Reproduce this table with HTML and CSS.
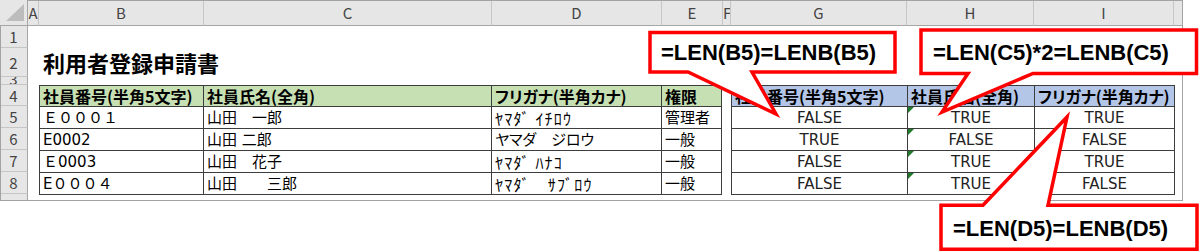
FILE: index.html
```html
<!DOCTYPE html>
<html>
<head>
    <meta charset="utf-8">
    <title>利用者登録申請書</title>
    <link rel="stylesheet" href="styles.css">
</head>
<body>
    <div class="sheet">
        <div class="corner"></div>
        <div class="colhead">A</div>
        <div class="colhead">B</div>
        <div class="colhead">C</div>
        <div class="colhead">D</div>
        <div class="colhead">E</div>
        <div class="colhead">F</div>
        <div class="colhead">G</div>
        <div class="colhead">H</div>
        <div class="colhead">I</div>
        <div class="colhead colhead-end"></div>

        <div class="rowhead">1</div>
        <div class="rowhead">2</div>
        <div class="rowhead rowhead-thin">3</div>
        <div class="rowhead">4</div>
        <div class="rowhead">5</div>
        <div class="rowhead">6</div>
        <div class="rowhead">7</div>
        <div class="rowhead">8</div>
        <div class="rowhead rowhead-end"></div>

        <div class="title">利用者登録申請書</div>

        <!-- 入力データ -->
        <table class="list list-src">
            <colgroup>
                <col class="w-b">
                <col class="w-c">
                <col class="w-d">
                <col class="w-e">
            </colgroup>
            <tr class="src-head">
                <th>社員番号(半角5文字)</th>
                <th>社員氏名(全角)</th>
                <th class="kana">フリガナ(半角カナ)</th>
                <th>権限</th>
            </tr>
            <tr>
                <td>Ｅ０００１</td>
                <td>山田　一郎</td>
                <td class="hw">ﾔﾏﾀﾞ ｲﾁﾛｳ</td>
                <td>管理者</td>
            </tr>
            <tr>
                <td>E0002</td>
                <td>山田 二郎</td>
                <td class="kana">ヤマダ　ジロウ</td>
                <td>一般</td>
            </tr>
            <tr>
                <td>Ｅ0003</td>
                <td>山田　花子</td>
                <td class="hw">ﾔﾏﾀﾞ ﾊﾅｺ</td>
                <td>一般</td>
            </tr>
            <tr>
                <td>E０００４</td>
                <td>山田　　三郎</td>
                <td class="hw">ﾔﾏﾀﾞ　ｻﾌﾞﾛｳ</td>
                <td>一般</td>
            </tr>
        </table>

        <!-- チェック結果 -->
        <table class="list list-chk">
            <colgroup>
                <col class="w-g">
                <col class="w-h">
                <col class="w-i">
            </colgroup>
            <tr class="chk-head">
                <th>社員番号(半角5文字)</th>
                <th>社員氏名(全角)</th>
                <th class="kana">フリガナ(半角カナ)</th>
            </tr>
            <tr>
                <td>FALSE</td>
                <td class="flag">TRUE</td>
                <td>TRUE</td>
            </tr>
            <tr>
                <td>TRUE</td>
                <td class="flag">FALSE</td>
                <td>FALSE</td>
            </tr>
            <tr>
                <td>FALSE</td>
                <td class="flag">TRUE</td>
                <td>TRUE</td>
            </tr>
            <tr>
                <td>FALSE</td>
                <td class="flag">TRUE</td>
                <td>FALSE</td>
            </tr>
        </table>
    </div>

    <!-- 数式の吹き出し -->
    <svg class="callouts" width="1200" height="252" viewBox="0 0 1200 252">
        <path class="balloon" d="M650,32.5 H895 V72 H752 L776,114 L688,72 H650 Z"/>
        <text class="formula" x="661" y="60">=LEN(B5)=LENB(B5)</text>

        <path class="balloon" d="M921,30 H1196.5 V73.5 H1033 L942,112 L968,73.5 H921 Z"/>
        <text class="formula" x="933" y="60">=LEN(C5)*2=LENB(C5)</text>

        <path class="balloon" d="M941,205.3 H983 L1067,117 L1048,205.3 H1197 V249.3 H941 Z"/>
        <text class="formula" x="953" y="236">=LEN(D5)=LENB(D5)</text>
    </svg>
</body>
</html>
```

FILE: styles.css
```css
* {
    box-sizing: border-box;
}

body {
    margin: 0;
    width: 1200px;
    height: 252px;
    overflow: hidden;
    position: relative;
    background-color: #ffffff;
    color: #000000;
    font-family: "Noto Sans CJK JP", sans-serif;
}

.sheet {
    display: grid;
    grid-template-columns: 28px 11px 165px 288px 170px 61px 8px 176px 127px 140px 9px;
    grid-template-rows: 26px 22px 29px 8px 21px 22px 22px 22px 22px 7px;
    width: 1183px;
    background-color: #ffffff;
    outline: 1px solid #a3a3a3;
    outline-offset: -1px;
}

/* 見出し (列・行) */
.corner {
    background-color: #e6e6e6;
    border-right: 1px solid #a6a6a6;
    border-bottom: 1px solid #a6a6a6;
    position: relative;
}

.corner::after {
    content: "";
    position: absolute;
    right: 3px;
    bottom: 4px;
    width: 18px;
    height: 17px;
    background-color: #bcbcbc;
    clip-path: polygon(100% 0, 100% 100%, 0 100%);
}

.colhead {
    background-color: #e6e6e6;
    border-right: 1px solid #c6c6c6;
    border-bottom: 1px solid #a6a6a6;
    color: #444444;
    font-size: 15px;
    line-height: 25px;
    text-align: center;
    white-space: nowrap;
    overflow: hidden;
}

.colhead-end {
    border-right: none;
}

.rowhead {
    grid-column: 1;
    background-color: #e6e6e6;
    border-right: 1px solid #a6a6a6;
    border-bottom: 1px solid #c6c6c6;
    color: #444444;
    font-size: 15px;
    display: flex;
    align-items: center;
    justify-content: center;
    overflow: hidden;
}

.rowhead-thin {
    align-items: flex-start;
    line-height: 4px;
}

.rowhead-end {
    border-bottom: none;
}

.title {
    grid-column: 3 / 6;
    grid-row: 3;
    align-self: end;
    padding: 0 0 4px 4px;
    font-size: 22px;
    font-weight: bold;
    line-height: 1;
}

/* 表 */
.list {
    grid-row: 5 / 10;
    align-self: start;
    border-spacing: 0;
    table-layout: fixed;
    border-left: 1px solid #3d3d3d;
    border-top: 1px solid #3d3d3d;
}

.list-src {
    grid-column: 3 / 7;
    width: 683px;
}

.list-chk {
    grid-column: 8 / 11;
    width: 444px;
}

.w-b { width: 164px; }
.w-c { width: 288px; }
.w-d { width: 170px; }
.w-e { width: 60px; }
.w-g { width: 176px; }
.w-h { width: 127px; }
.w-i { width: 140px; }

.list th,
.list td {
    border-right: 1px solid #3d3d3d;
    border-bottom: 1px solid #3d3d3d;
    padding: 0 3px;
    white-space: nowrap;
    overflow: hidden;
    text-align: left;
    line-height: 20px;
}

.list th {
    height: 21px;
    font-size: 16px;
    font-weight: bold;
}

/* 英数字は幅の広い書体、かなと漢字は Noto */
.list td {
    height: 22px;
    font-family: "DejaVu Sans", "Noto Sans CJK JP", sans-serif;
    font-size: 15px;
}

/* 半角カナ */
.list td.hw {
    font-family: "Noto Sans CJK JP", sans-serif;
    font-size: 16px;
    letter-spacing: 1.2px;
}

.src-head th {
    background-color: #c6e0b4;
}

.chk-head th {
    background-color: #b4c6e7;
}

.list-chk td {
    text-align: center;
    color: #222222;
}

.kana {
    font-feature-settings: "palt";
}

/* エラーインジケーター */
.flag {
    position: relative;
}

.flag::before {
    content: "";
    position: absolute;
    left: 0;
    top: 0;
    width: 6px;
    height: 6px;
    background-color: #1f7a2a;
    clip-path: polygon(0 0, 100% 0, 0 100%);
}

/* 吹き出し */
.callouts {
    position: absolute;
    left: 0;
    top: 0;
    pointer-events: none;
}

.balloon {
    fill: #ffffff;
    stroke: #ff0000;
    stroke-width: 3.5;
    stroke-linejoin: miter;
}

.formula {
    font-family: "Liberation Sans", Arial, sans-serif;
    font-size: 22px;
    font-weight: bold;
    fill: #000000;
}
```
